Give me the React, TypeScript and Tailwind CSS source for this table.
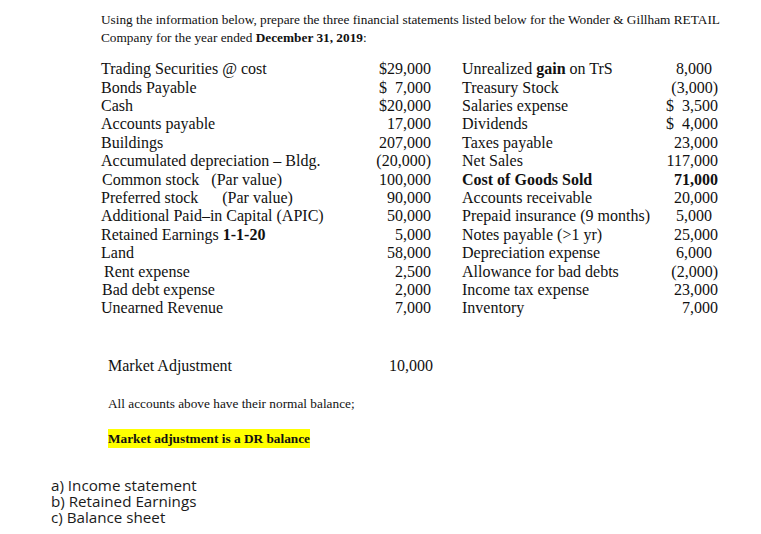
import React from "react";

type Row = { label: React.ReactNode; amount: string; pad?: boolean };

const left: Row[] = [
  { label: "Trading Securities @ cost", amount: "$29,000" },
  { label: "Bonds Payable", amount: "$\u00a0 7,000" },
  { label: "Cash", amount: "$20,000" },
  { label: "Accounts payable", amount: "17,000" },
  { label: "Buildings", amount: "207,000" },
  { label: "Accumulated depreciation \u2013 Bldg.", amount: "(20,000)" },
  { label: <span className="pl-[1px]">Common stock&nbsp;&nbsp; (Par value)</span>, amount: "100,000" },
  { label: "Preferred stock\u00a0\u00a0\u00a0\u00a0\u00a0 (Par value)", amount: "90,000" },
  { label: "Additional Paid\u2013in Capital (APIC)", amount: "50,000" },
  { label: <>Retained Earnings <b>1-1-20</b></>, amount: "5,000" },
  { label: "Land", amount: "58,000" },
  { label: <span className="pl-[3px]">Rent expense</span>, amount: "2,500" },
  { label: <span className="pl-[1px]">Bad debt expense</span>, amount: "2,000" },
  { label: "Unearned Revenue", amount: "7,000" },
];

const right: Row[] = [
  { label: <>Unrealized <b>gain</b> on TrS</>, amount: "8,000", pad: true },
  { label: "Treasury Stock", amount: "(3,000)" },
  { label: "Salaries expense", amount: "$\u00a0 3,500" },
  { label: "Dividends", amount: "$\u00a0 4,000" },
  { label: "Taxes payable", amount: "23,000" },
  { label: "Net Sales", amount: "117,000" },
  { label: <b>Cost of Goods Sold</b>, amount: "71,000" },
  { label: "Accounts receivable", amount: "20,000" },
  { label: "Prepaid insurance (9 months)", amount: "5,000", pad: true },
  { label: "Notes payable (>1 yr)", amount: "25,000" },
  { label: "Depreciation expense", amount: "6,000", pad: true },
  { label: "Allowance for bad debts", amount: "(2,000)" },
  { label: "Income tax expense", amount: "23,000" },
  { label: "Inventory", amount: "7,000" },
];

const Column = ({ rows, labelW, amountW, boldIdx }: { rows: Row[]; labelW: string; amountW: string; boldIdx?: number }) => (
  <div className="flex flex-col">
    {rows.map((r, i) => (
      <div key={i} className="flex h-[18.4px] items-center">
        <div className={`${labelW} whitespace-nowrap`}>{r.label}</div>
        <div className={`${amountW} text-right whitespace-nowrap ${r.pad ? "pr-[6px]" : ""} ${i === boldIdx ? "font-bold" : ""}`}>{r.amount}</div>
      </div>
    ))}
  </div>
);

export default function App() {
  return (
    <div className="w-[761px] h-[534px] bg-white text-[#111] overflow-hidden relative">
      <div className="pl-[101px] pt-[11px] font-['Liberation_Serif',serif] text-[13.3px] leading-[18px]">
        <p className="whitespace-nowrap">Using the information below, prepare the three financial statements listed below for the Wonder &amp; Gillham RETAIL</p>
        <p>Company for the year ended <b>December 31, 2019</b>:</p>
      </div>

      <div className="flex pl-[101px] pt-[13px] font-['Liberation_Serif',serif] text-[16px]">
        <Column rows={left} labelW="w-[250px]" amountW="w-[80px]" />
        <div className="pl-[31px]">
          <Column rows={right} labelW="w-[196px]" amountW="w-[60px]" boldIdx={6} />
        </div>
      </div>

      <div className="pl-[108px] pt-[39px] font-['Liberation_Serif',serif]">
        <div className="flex items-center h-[20px] text-[16px]">
          <span className="w-[245px]">Market Adjustment</span>
          <span className="w-[80px] text-right">10,000</span>
        </div>
        <p className="mt-[20px] text-[13.3px] leading-[16px]">All accounts above have their normal balance;</p>
        <p className="mt-[17px] text-[13.3px] leading-[17px]">
          <span className="bg-[#ffff00] font-bold inline-block py-[1px]">Market adjustment is a DR balance</span>
        </p>
      </div>

      <div className="pl-[51px] pt-[29px] font-['Open_Sans','Noto_Sans',sans-serif] text-[15.2px] leading-[16px] text-[#1b1b1b]">
        <p>a) Income statement</p>
        <p>b) Retained Earnings</p>
        <p>c) Balance sheet</p>
      </div>
    </div>
  );
}
